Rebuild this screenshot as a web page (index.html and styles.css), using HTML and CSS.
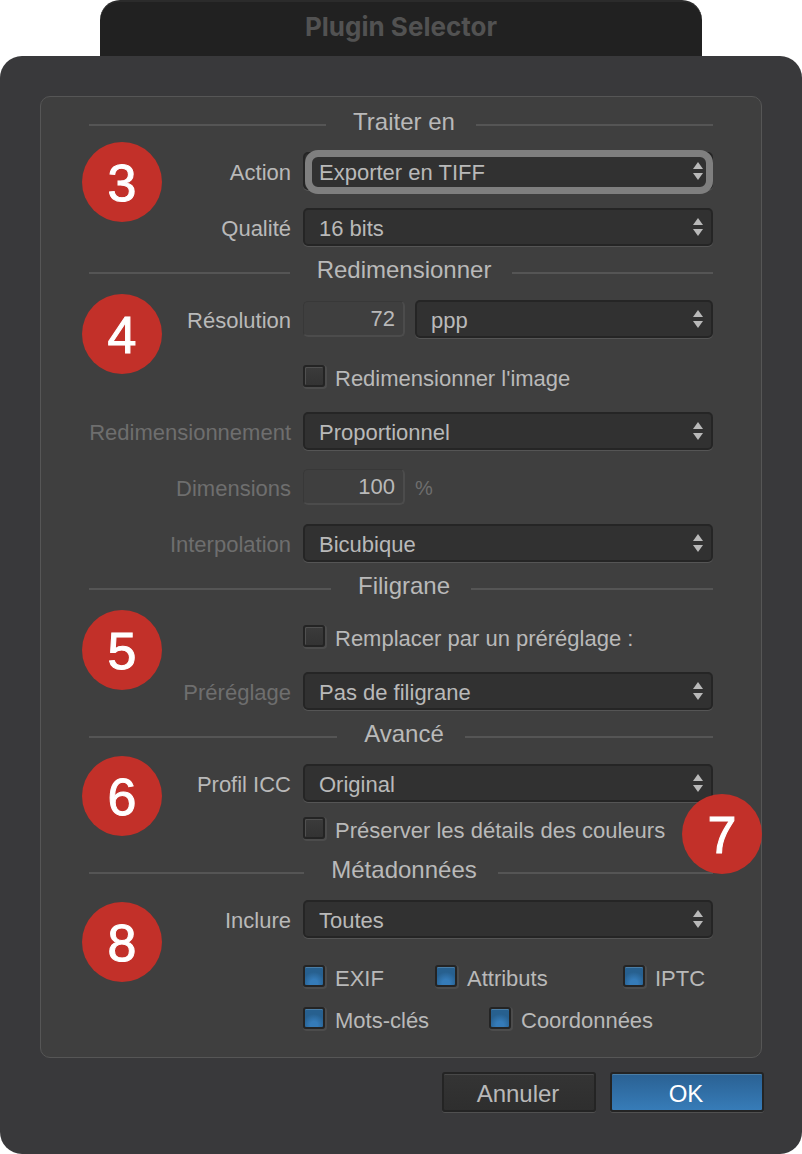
FILE: index.html
```html
<!DOCTYPE html>
<html lang="fr">
<head>
    <meta charset="utf-8">
    <title>Plugin Selector</title>
    <link rel="stylesheet" href="styles.css">
</head>
<body>
    <header class="titlebar"><h1>Plugin Selector</h1></header>
    <form class="dialog">
        <div class="panel">
            <section>
                <span class="badge badge-first">3</span>
                <h2>Traiter en</h2>
                <div class="row">
                    <label for="action">Action</label>
                    <div class="select">
                        <select id="action"><option>Exporter en TIFF</option></select>
                        <span class="focus-ring"></span>
                    </div>
                </div>
                <div class="row">
                    <label for="quality">Qualité</label>
                    <div class="select">
                        <select id="quality"><option>16 bits</option></select>
                    </div>
                </div>
            </section>

            <section>
                <span class="badge">4</span>
                <h2>Redimensionner</h2>
                <div class="row">
                    <label for="resolution">Résolution</label>
                    <div class="fields">
                        <input type="text" class="number" id="resolution" value="72">
                        <div class="select">
                            <select aria-label="Unité"><option>ppp</option></select>
                        </div>
                    </div>
                </div>
                <div class="checks">
                    <label class="check"><input type="checkbox"><span>Redimensionner l'image</span></label>
                </div>
                <div class="row off">
                    <label for="resizing">Redimensionnement</label>
                    <div class="select">
                        <select id="resizing"><option>Proportionnel</option></select>
                    </div>
                </div>
                <div class="row off">
                    <label for="dimensions">Dimensions</label>
                    <div class="fields">
                        <input type="text" class="number" id="dimensions" value="100">
                        <span class="unit">%</span>
                    </div>
                </div>
                <div class="row off">
                    <label for="interpolation">Interpolation</label>
                    <div class="select">
                        <select id="interpolation"><option>Bicubique</option></select>
                    </div>
                </div>
            </section>

            <section>
                <span class="badge">5</span>
                <h2>Filigrane</h2>
                <div class="checks">
                    <label class="check"><input type="checkbox"><span>Remplacer par un préréglage :</span></label>
                </div>
                <div class="row off">
                    <label for="preset">Préréglage</label>
                    <div class="select">
                        <select id="preset"><option>Pas de filigrane</option></select>
                    </div>
                </div>
            </section>

            <section>
                <span class="badge badge-icc">6</span>
                <span class="badge badge-right">7</span>
                <h2>Avancé</h2>
                <div class="row">
                    <label for="icc">Profil ICC</label>
                    <div class="select">
                        <select id="icc"><option>Original</option></select>
                    </div>
                </div>
                <div class="checks checks-last">
                    <label class="check"><input type="checkbox"><span>Préserver les détails des couleurs</span></label>
                </div>
            </section>

            <section>
                <span class="badge badge-last">8</span>
                <h2>Métadonnées</h2>
                <div class="row">
                    <label for="include">Inclure</label>
                    <div class="select">
                        <select id="include"><option>Toutes</option></select>
                    </div>
                </div>
                <div class="checks checks-three">
                    <label class="check"><input type="checkbox" checked><span>EXIF</span></label>
                    <label class="check"><input type="checkbox" checked><span>Attributs</span></label>
                    <label class="check"><input type="checkbox" checked><span>IPTC</span></label>
                </div>
                <div class="checks checks-two">
                    <label class="check"><input type="checkbox" checked><span>Mots-clés</span></label>
                    <label class="check"><input type="checkbox" checked><span>Coordonnées</span></label>
                </div>
            </section>
        </div>
        <div class="buttons">
            <button type="button">Annuler</button>
            <button type="button" class="ok">OK</button>
        </div>
    </form>
</body>
</html>
```

FILE: styles.css
```css
* {
    box-sizing: border-box;
}

body {
    margin: 0;
    background: #fff;
    color: #b9b9b9;
    font-family: "Liberation Sans", Arial, sans-serif;
    font-size: 22px;
}

.titlebar {
    height: 56px;
    margin: 0 100px;
    border-top: 2px solid #2b2b2b;
    border-radius: 20px 20px 0 0;
    background: #212121;
    text-align: center;
}

.titlebar h1 {
    margin: 0;
    color: #525252;
    font: bold 26px/50px Inter, sans-serif;
}

.dialog {
    padding: 40px 38px 42px 40px;
    border-radius: 22px;
    background: #39393b;
}

.panel {
    margin-right: 2px;
    padding: 1px 48px 17px;
    border: 1px solid #565656;
    border-radius: 10px;
    background: #3f3f3f;
}

section {
    position: relative;
    padding-top: 6px;
}

h2 {
    display: flex;
    align-items: center;
    height: 36px;
    margin: 0 0 12px;
    font-size: 24px;
    font-weight: normal;
}

/* rules on both sides of the section title */
h2::before,
h2::after {
    content: "";
    flex: 1;
    height: 2px;
    margin: 6px 27px 0 0;
    background: #555;
}

h2::after {
    margin: 6px 0 0 21px;
}

.row {
    display: grid;
    grid-template-columns: 202px 1fr;
    column-gap: 12px;
    align-items: center;
    min-height: 38px;
}

.row + .row {
    margin-top: 18px;
}

.row > label {
    padding-top: 3px;
    text-align: right;
}

.off > label,
.unit {
    color: #6e6e6e;
}

.unit {
    padding-top: 3px;
    font-size: 20px;
}

.fields {
    display: flex;
    align-items: center;
    gap: 10px;
}

.select {
    position: relative;
    flex: 1;
}

select {
    display: block;
    width: 100%;
    height: 38px;
    padding: 2px 30px 0 14px;
    border: 2px solid #252525;
    border-radius: 5px;
    background: #313131;
    box-shadow: 0 1px 0 #555;
    color: #b9b9b9;
    font: inherit;
    appearance: none;
}

/* up and down arrows */
.select::before,
.select::after {
    content: "";
    position: absolute;
    right: 10px;
    border: 5px solid transparent;
    pointer-events: none;
}

.select::before {
    top: 10px;
    border-top: 0;
    border-bottom: 7px solid #b9b9b9;
}

.select::after {
    top: 21px;
    border-bottom: 0;
    border-top: 7px solid #b9b9b9;
}

.focus-ring {
    position: absolute;
    inset: -2px 0 -4px 2px;
    border: 7px solid #7f7f7f;
    border-radius: 13px;
    pointer-events: none;
}

.number {
    width: 102px;
    height: 36px;
    padding: 0 8px;
    border: 1px solid #383838;
    border-right: 2px solid #4c4c4c;
    border-bottom: 2px solid #4c4c4c;
    border-radius: 5px;
    background: #3f3f3f;
    color: #b9b9b9;
    font: inherit;
    text-align: right;
}

.checks {
    display: grid;
    margin-left: 214px;
}

.check {
    display: flex;
    align-items: center;
    gap: 10px;
    height: 44px;
    white-space: nowrap;
}

.row + .checks {
    margin-top: 18px;
}

.checks + .row {
    margin-top: 12px;
}

.row + .checks-last {
    margin-top: 12px;
}

.checks-last .check {
    height: 32px;
}

.checks-three {
    grid-template-columns: 132px 188px 1fr;
}

.checks-two {
    grid-template-columns: 186px 1fr;
}

.checks-two .check {
    height: 40px;
}

.check span {
    padding-top: 2px;
}

.check input {
    width: 22px;
    height: 22px;
    margin: 0 0 4px;
    border: 2px solid #242424;
    border-radius: 3px;
    background: linear-gradient(#3b3b3b, #333);
    box-shadow: 1px 1px 0 1px #4c4c4c, inset 1px 1px 0 #505050;
    appearance: none;
}

.check input:checked {
    background: radial-gradient(circle at 50% 90%, #357bb8 20%, #27608f 60%);
    box-shadow: 1px 1px 0 1px #4c4c4c, inset 0 1px 0 #4a7da5;
}

.badge {
    position: absolute;
    z-index: 1;
    top: 48px;
    left: -7px;
    width: 80px;
    height: 80px;
    border-radius: 50%;
    background: #c23029;
    color: #fff;
    font-size: 52px;
    line-height: 82px;
    text-align: center;
    -webkit-text-stroke: 1px #fff;
}

.badge-first {
    top: 44px;
}

.badge-icc {
    top: 46px;
}

.badge-right {
    top: 84px;
    right: -49px;
    left: auto;
}

.badge-last {
    top: 56px;
}

.buttons {
    display: flex;
    justify-content: flex-end;
    gap: 14px;
    margin-top: 14px;
}

button {
    width: 154px;
    height: 40px;
    padding: 3px 2px 0 0;
    border: 2px solid #242424;
    border-radius: 3px;
    background: linear-gradient(#343434, #2e2e2e);
    box-shadow: 0 1px 0 #505050, inset 0 1px 0 #484848;
    color: #b9b9b9;
    font: 24px "Liberation Sans", Arial, sans-serif;
}

.ok {
    background: linear-gradient(#2a6193, #377cb8);
    box-shadow: 0 1px 0 #505050, inset 0 1px 0 #4a7da5;
    color: #fff;
}
```
